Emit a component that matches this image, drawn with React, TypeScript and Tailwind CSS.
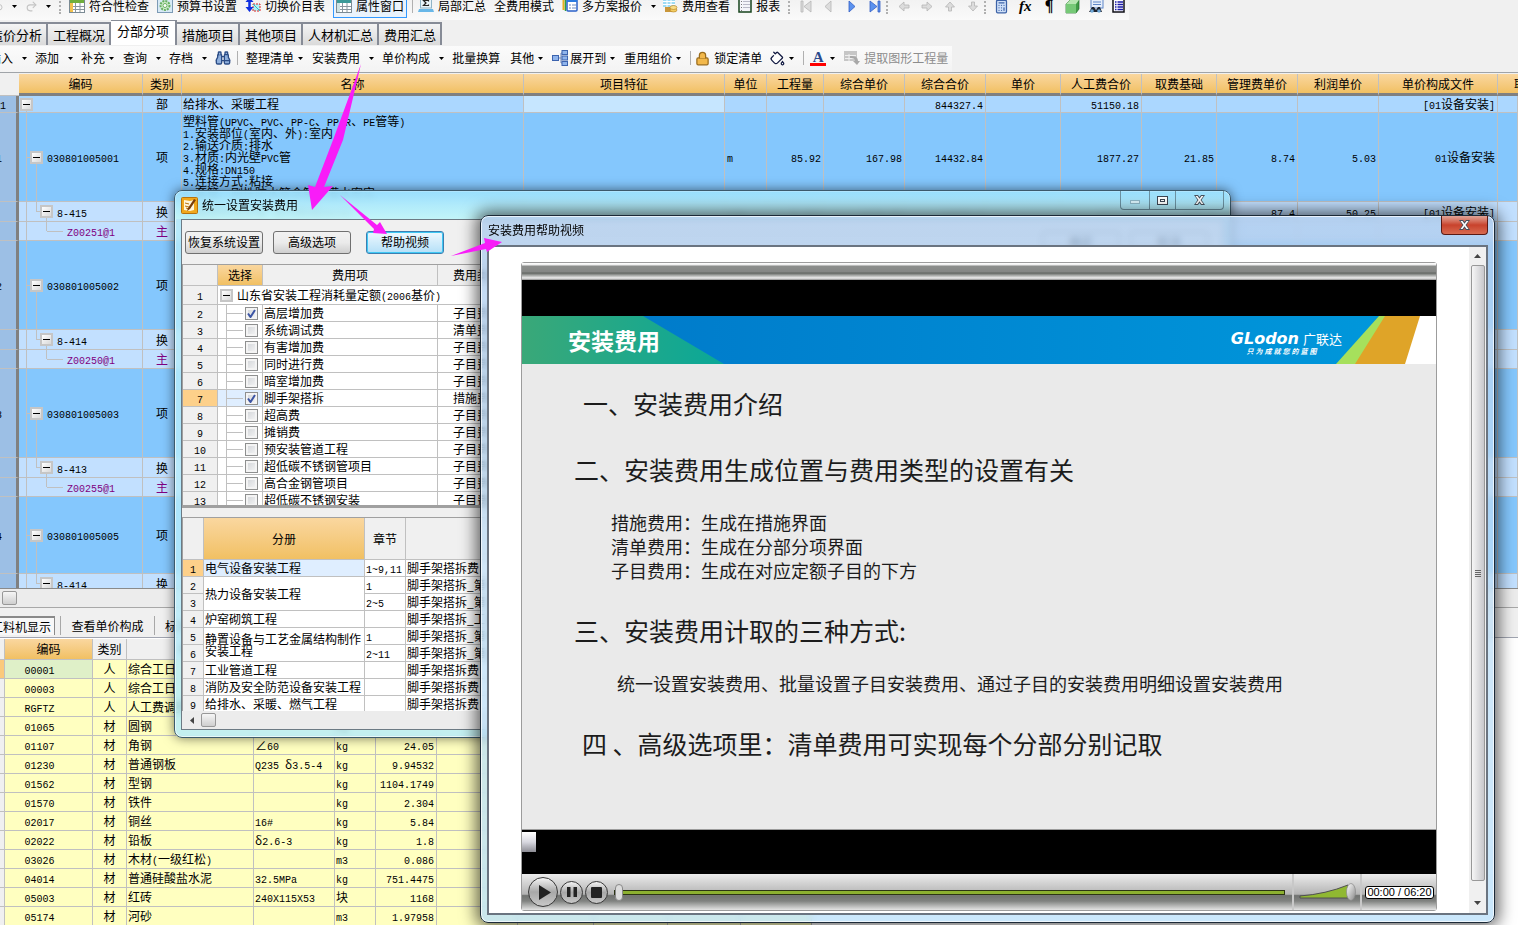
import { Fragment, useState } from "react";
import type { ReactNode } from "react";
import { Binoculars, Calculator, Lock, Undo2, Redo2, PaintBucket } from "lucide-react";

interface GridRow {
  no: string;
  level: number;
  code: string;
  kind: string;
  name?: string[];
  unit?: string;
  values?: string[];
  file?: string;
}

interface Material {
  code: string;
  kind: string;
  name: string;
  spec: string;
  unit: string;
  qty: string;
}

const gridHeaders = [
  "编码", "类别", "名称", "项目特征", "单位", "工程量", "综合单价", "综合合价",
  "单价", "人工费合价", "取费基础", "管理费单价", "利润单价", "单价构成文件",
];

const gridRows: GridRow[] = [
  {
    no: "1", level: 0, code: "", kind: "部", name: ["给排水、采暖工程"],
    values: ["", "", "844327.4", "", "51150.18", "", "", ""], file: "[01设备安装]",
  },
  {
    no: "1", level: 1, code: "030801005001", kind: "项",
    name: [
      "塑料管(UPVC、PVC、PP-C、PP-R、PE管等)",
      "1.安装部位(室内、外):室内",
      "2.输送介质:排水",
      "3.材质:内光壁PVC管",
      "4.规格:DN150",
      "5.连接方式:粘接",
      "6.套管、刚性防水管含管件灌水密实",
    ],
    unit: "m",
    values: ["85.92", "167.98", "14432.84", "", "1877.27", "21.85", "8.74", "5.03"],
    file: "01设备安装",
  },
  {
    no: "", level: 2, code: "8-415", kind: "换", name: ["承插塑料排水管 室内粘接DN150"], unit: "10m",
    values: ["8.592", "1679.83", "14433.1", "", "1877.27", "218.5", "87.4", "50.25"], file: "[01设备安装]",
  },
  { no: "", level: 3, code: "Z00251@1", kind: "主" },
  { no: "2", level: 1, code: "030801005002", kind: "项" },
  { no: "", level: 2, code: "8-414", kind: "换" },
  { no: "", level: 3, code: "Z00250@1", kind: "主" },
  { no: "3", level: 1, code: "030801005003", kind: "项" },
  { no: "", level: 2, code: "8-413", kind: "换" },
  { no: "", level: 3, code: "Z00255@1", kind: "主" },
  { no: "4", level: 1, code: "030801005005", kind: "项" },
  { no: "", level: 2, code: "8-414", kind: "换" },
];

const rowHeights = [17, 89, 20, 19, 89, 20, 19, 89, 20, 19, 77, 20];
const rowColors = ["bg-[#abd7ff]", "bg-[#84c7fd]", "bg-[#c2e0ff]", "bg-[#c2e0ff]"];

const feeItems = [
  ["高层增加费", "子目费用"], ["系统调试费", "清单费用"], ["有害增加费", "子目费用"],
  ["同时进行费", "子目费用"], ["暗室增加费", "子目费用"], ["脚手架搭拆", "措施费用"],
  ["超高费", "子目费用"], ["摊销费", "子目费用"], ["预安装管道工程", "子目费用"],
  ["超低碳不锈钢管项目", "子目费用"], ["高合金钢管项目", "子目费用"], ["超低碳不锈钢安装", "子目费用"],
];

const volumes = [
  { name: "电气设备安装工程", span: 1, chapter: "1~9,11", fee: "脚手架搭拆费" },
  { name: "热力设备安装工程", span: 2, chapter: "1", fee: "脚手架搭拆_第一章" },
  { name: "", span: 0, chapter: "2~5", fee: "脚手架搭拆_第二章" },
  { name: "炉窑砌筑工程", span: 1, chapter: "", fee: "脚手架搭拆_工业炉" },
  { name: "静置设备与工艺金属结构制作安装工程", span: 2, chapter: "1", fee: "脚手架搭拆_第一章" },
  { name: "", span: 0, chapter: "2~11", fee: "脚手架搭拆_第二章" },
  { name: "工业管道工程", span: 1, chapter: "", fee: "脚手架搭拆费" },
  { name: "消防及安全防范设备安装工程", span: 1, chapter: "", fee: "脚手架搭拆费" },
  { name: "给排水、采暖、燃气工程", span: 1, chapter: "", fee: "脚手架搭拆费" },
];

const materials: Material[] = [
  { code: "00001", kind: "人", name: "综合工日", spec: "", unit: "工日", qty: "" },
  { code: "00003", kind: "人", name: "综合工日", spec: "", unit: "工日", qty: "" },
  { code: "RGFTZ", kind: "人", name: "人工费调整", spec: "", unit: "元", qty: "" },
  { code: "01065", kind: "材", name: "圆钢", spec: "", unit: "kg", qty: "" },
  { code: "01107", kind: "材", name: "角钢", spec: "∠60", unit: "kg", qty: "24.05" },
  { code: "01230", kind: "材", name: "普通钢板", spec: "Q235 δ3.5-4", unit: "kg", qty: "9.94532" },
  { code: "01562", kind: "材", name: "型钢", spec: "", unit: "kg", qty: "1104.1749" },
  { code: "01570", kind: "材", name: "铁件", spec: "", unit: "kg", qty: "2.304" },
  { code: "02017", kind: "材", name: "铜丝", spec: "16#", unit: "kg", qty: "5.84" },
  { code: "02022", kind: "材", name: "铅板", spec: "δ2.6-3", unit: "kg", qty: "1.8" },
  { code: "03026", kind: "材", name: "木材(一级红松)", spec: "", unit: "m3", qty: "0.086" },
  { code: "04014", kind: "材", name: "普通硅酸盐水泥", spec: "32.5MPa", unit: "kg", qty: "751.4475" },
  { code: "05003", kind: "材", name: "红砖", spec: "240X115X53", unit: "块", qty: "1168" },
  { code: "05174", kind: "材", name: "河砂", spec: "", unit: "m3", qty: "1.97958" },
];

// Latin runs are set in a half-width mono face next to the full-width Chinese.
// Their own line height is zero so that they never stretch a table row.
function Mixed({ text }: { text: string }) {
  return (
    <>
      {text.split(/([\x20-\x7e]+)/).map((part, i) =>
        i % 2 === 1 ? (
          <span key={i} className="font-['Liberation_Mono'] text-[10px] leading-[0] whitespace-pre">{part}</span>
        ) : (
          <Fragment key={i}>{part}</Fragment>
        )
      )}
    </>
  );
}

function Caret() {
  return (
    <svg width="5" height="3" viewBox="0 0 5 3" className="shrink-0">
      <path d="M0 0h5L2.5 3z" fill="#000" />
    </svg>
  );
}

function Sep() {
  return <span className="h-3.5 w-px shrink-0 bg-[#b0b0b0]" />;
}

function Grip() {
  return <span className="h-4 w-0 shrink-0 border-l-2 border-dotted border-[#b0b0b0]" />;
}

function Tool({ icon, label }: { icon?: ReactNode; label: string }) {
  return (
    <button className="flex shrink-0 items-center gap-1 whitespace-nowrap">
      {icon}
      {label}
    </button>
  );
}

function Menu({ label, wide, icon }: { label?: string; wide?: boolean; icon?: ReactNode }) {
  return (
    <button className="flex shrink-0 items-center whitespace-nowrap">
      {icon}
      {label}
      <span className={wide ? "flex w-[22px] justify-center" : "flex w-[18px] pl-1"}>
        <Caret />
      </span>
    </button>
  );
}

function SheetIcon({ head, side }: { head: string; side: string }) {
  return (
    <svg width="16" height="16" viewBox="0 0 16 16" className="shrink-0">
      <rect x="0.5" y="0.5" width="15" height="14" fill="#fff" stroke="#7a8a94" />
      <rect x="1" y="1" width="14" height="4" fill={head} />
      <path d="M1 8.5h14M1 11.5h14M6.5 5v9M11 5v9" stroke="#8a979f" />
      <rect x="1" y="5" width="3" height="9" fill={side} />
    </svg>
  );
}

function GearSheetIcon() {
  return (
    <svg width="16" height="16" viewBox="0 0 16 16" className="shrink-0">
      <rect x="0.5" y="0.5" width="15" height="14" fill="#d7e9f5" stroke="#7c9ab5" />
      <circle cx="8" cy="7.5" r="4.5" fill="#cfeccb" stroke="#68b062" strokeWidth="2" strokeDasharray="2 1" />
      <circle cx="8" cy="7.5" r="2" fill="#fff" stroke="#68b062" />
    </svg>
  );
}

function SwapIcon() {
  return (
    <svg width="16" height="16" viewBox="0 0 16 16" className="shrink-0">
      <path d="M8 6h7v7H8z" fill="#aef2f4" stroke="#e02020" strokeDasharray="2 1" />
      <path d="M8 6l7 7" stroke="#30b8c8" />
      <path d="M4.500 2v8" stroke="#1030e0" strokeWidth="2.500" />
      <path d="M0.500 9h8l-4 5zM0.500 4h8l-4-5z" fill="#1030e0" />
    </svg>
  );
}

function SumIcon() {
  return (
    <svg width="16" height="16" viewBox="0 0 16 16" className="shrink-0">
      <rect x="2.5" y="0" width="11" height="10" fill="#e8f4fa" stroke="#8fb3c6" />
      <path d="M10.500 3.500V2.500H5.500L8 5L5.500 7.500H10.500V6.500" fill="none" stroke="#222" strokeWidth="1.200" />
      <path d="M1 11h14l1 3H0z" fill="#68b7e8" />
    </svg>
  );
}

function PlansIcon() {
  return (
    <svg width="16" height="16" viewBox="0 0 16 16" className="shrink-0">
      <path d="M1.500 1v11" stroke="#e8b020" strokeWidth="2" />
      <path d="M3.500 1v12" stroke="#30a040" strokeWidth="1.500" />
      <rect x="5" y="1" width="10" height="12" rx="1" fill="#fff" stroke="#2b62c9" strokeWidth="1.500" />
      <rect x="5" y="1" width="10" height="3" fill="#2b7be0" />
      <path d="M7 7h2M10 7h4M7 10h2M10 10h4" stroke="#6a8ac0" />
    </svg>
  );
}

function CoinsIcon() {
  return (
    <svg width="16" height="16" viewBox="0 0 16 16" className="shrink-0">
      <rect x="1" y="0" width="12" height="9" fill="#9edbf4" />
      <path d="M1 3.500h12M1 6.500h12M5 0v9M9 0v9" stroke="#fff" />
      <path d="M3 9h7v5H3z" fill="#c9973a" />
      <ellipse cx="11.500" cy="12" rx="3.500" ry="2" fill="#f3cd62" stroke="#b07c20" strokeWidth="0.600" />
      <ellipse cx="11.500" cy="9.500" rx="3.500" ry="2" fill="#f8dc86" stroke="#b07c20" strokeWidth="0.600" />
    </svg>
  );
}

function ReportIcon() {
  return (
    <svg width="14" height="16" viewBox="0 0 14 16" className="shrink-0">
      <rect x="1" y="-2" width="12" height="16" fill="#f4f4fa" stroke="#17441c" strokeWidth="1.500" />
      <path d="M5 3.500h7M5 6.500h7M5 9.500h7" stroke="#b9b9c8" />
      <path d="M3.500 0v13" stroke="#777" strokeDasharray="1 2" />
    </svg>
  );
}

function NavIcon({ d, active }: { d: string; active?: boolean }) {
  return (
    <button className="flex w-[23px] justify-center">
      <svg width="12" height="13" viewBox="0 0 12 13">
        <path d={d} fill={active ? "#5b92ef" : "#dcdcdc"} stroke={active ? "#3560c4" : "#b5b5b5"} strokeWidth="0.800" />
      </svg>
    </button>
  );
}

function TreeBox() {
  return (
    <span className="flex size-[13px] shrink-0 items-center justify-center border-2 border-[#c6c6c6] bg-gradient-to-br from-white to-[#d8d8d8]">
      <span className="h-px w-[7px] bg-black" />
    </span>
  );
}

function TreeCell({ level, code, height }: { level: number; code: string; height: number }) {
  const box = (
    <span className="flex h-full w-[13px] shrink-0 flex-col items-center">
      <span className="flex-1" />
      <TreeBox />
      <span className="w-px flex-1 bg-[#c0c0c0]" />
    </span>
  );
  return (
    <div className="flex items-center" style={{ height }}>
      {level === 0 ? (
        <span className="flex h-full pl-px">{box}</span>
      ) : (
        <span className="h-full w-2 shrink-0 border-r border-[#c0c0c0]" />
      )}
      {level === 1 && <span className="h-px w-[3px] bg-[#c0c0c0]" />}
      {level === 2 && (
        <>
          <span className="h-1/2 w-2.5 shrink-0 self-start border-r border-[#c0c0c0]" />
          <span className="h-px w-[3px] bg-[#c0c0c0]" />
        </>
      )}
      {level === 3 && (
        <>
          <span className="h-1/2 w-5 shrink-0 self-start border-r border-[#c0c0c0]" />
          <span className="h-px w-4 bg-[#c0c0c0]" />
        </>
      )}
      {(level === 1 || level === 2) && box}
      <span className="pl-1"><Mixed text={code} /></span>
    </div>
  );
}

function MainToolbar() {
  return (
    <div className="flex h-5 w-fit shrink-0 items-start overflow-hidden bg-gradient-to-b from-[#f2f2f2] to-[#fafafa] pr-1 leading-3">
      <div className="-mt-0.5 flex h-4 items-center gap-2">
        <span className="flex w-[51px] shrink-0 items-center justify-between text-[#c4c4c4]">
          <Undo2 size={12} className="-ml-2" />
          <Caret />
          <Redo2 size={13} />
          <Caret />
        </span>
        <Grip />
        <Tool icon={<SheetIcon head="#6fae3c" side="#f2c14e" />} label="符合性检查" />
        <Tool icon={<GearSheetIcon />} label="预算书设置" />
        <Tool icon={<SwapIcon />} label="切换价目表" />
        <span className="flex shrink-0 items-center gap-[5px]">
          <button className="flex h-6 shrink-0 items-center gap-1 border border-[#3399ff] bg-[#eaf3fc] px-0.5">
            <SheetIcon head="#3c9a98" side="#cfe3e3" />
            属性窗口
          </button>
          <Sep />
          <Tool icon={<SumIcon />} label="局部汇总" />
        </span>
        <Tool label="全费用模式" />
        <Menu icon={<span className="flex pr-1"><PlansIcon /></span>} label="多方案报价" wide />
        <span className="-ml-2.5 flex gap-2">
          <Tool icon={<CoinsIcon />} label="费用查看" />
          <Tool icon={<ReportIcon />} label="报表" />
        </span>
        <Grip />
        <div className="-mr-2 -ml-1 flex">
          <NavIcon d="M1 1h2v11H1zM11 1v11L4 6.500z" />
          <NavIcon d="M8 1v11L2 6.500z" />
          <NavIcon d="M3 1v11L9 6.500z" active />
          <NavIcon d="M9 1h2v11H9zM1 1v11l7-5.500z" active />
        </div>
        <Grip />
        <div className="-mr-2 -ml-1 flex">
          <NavIcon d="M1 6.500l5-4.500v3h5v3H6v3z" />
          <NavIcon d="M11 6.500L6 2v3H1v3h5v3z" />
          <NavIcon d="M6 2l4.500 5h-3v4h-3V7h-3z" />
          <NavIcon d="M6 11l4.500-5h-3V2h-3v4h-3z" />
        </div>
        <Grip />
        <div className="flex items-center gap-2">
          <Calculator size={15} className="fill-[#cfe0f8] text-[#3d63a8]" />
          <span className="w-4 text-center font-['Liberation_Serif'] text-[15px] leading-none font-bold italic">fx</span>
          <span className="w-4 text-center font-['Liberation_Serif'] text-[16px] leading-none font-bold">¶</span>
          <svg width="15" height="15" viewBox="0 0 15 15">
            <path d="M1 5l4-4h9v9l-3 4H1z" fill="#3f9c46" stroke="#1f6a2a" strokeWidth="0.700" />
            <path d="M1 5h10v9H1z" fill="#76c977" />
            <path d="M1 5l4-4h9l-3 4z" fill="#b5e6b0" />
          </svg>
          <svg width="16" height="15" viewBox="0 0 16 15">
            <rect x="3" y="0" width="12" height="9" fill="#e6eefa" stroke="#5e86c8" />
            <path d="M5 3h8M5 5.500h8" stroke="#5e86c8" />
            <path d="M1 13l3-5h2l2 3 2-3h2l2 5z" fill="#1e2430" />
            <circle cx="4" cy="12" r="1.800" fill="#6fa8d8" />
            <circle cx="11" cy="12" r="1.800" fill="#6fa8d8" />
          </svg>
          <svg width="13" height="15" viewBox="0 0 13 15">
            <rect x="1" y="0" width="11" height="13" fill="#fff" stroke="#101018" strokeWidth="1.500" />
            <path d="M3 3h1.500M5.500 3H11M3 5.500h1.500M5.500 5.500H11M3 8h1.500M5.500 8H11M3 10.500h1.500M5.500 10.500H11" stroke="#1a1aa8" strokeWidth="1.300" />
          </svg>
        </div>
      </div>
    </div>
  );
}

function Tabs() {
  const tabs = ["造价分析", "工程概况", "分部分项", "措施项目", "其他项目", "人材机汇总", "费用汇总"];
  return (
    <div className="-ml-[15px] flex h-[25px] shrink-0 items-end text-[13px]">
      {tabs.map((tab) => (
        <button
          key={tab}
          className={
            tab === "分部分项"
              ? "h-[25px] shrink-0 border-t border-r-2 border-[#868b96] bg-white px-1.5 pb-1"
              : "h-[23px] shrink-0 border-t-2 border-r-2 border-[#868b96] bg-gradient-to-b from-[#f4f4f4] to-[#dadada] pr-1 pl-[5px]"
          }
        >
          {tab}
        </button>
      ))}
    </div>
  );
}

function EditToolbar() {
  return (
    <div className="flex h-[26px] w-fit shrink-0 items-center overflow-hidden bg-gradient-to-b from-[#fbfbfb] to-[#f3f3f3] pr-1 pb-0.5">
      <span className="-ml-[11px] flex">
        <Menu label="插入" wide />
        <Menu label="添加" wide />
        <Menu label="补充" />
        <Menu label="查询" wide />
        <Menu label="存档" wide />
      </span>
      <Binoculars size={16} className="mr-1.5 fill-[#8fb0dd] text-[#2c4d86]" />
      <Sep />
      <span className="flex pl-2">
        <Menu label="整理清单" />
        <Menu label="安装费用" wide />
        <Menu label="单价构成" wide />
      </span>
      <Tool label="批量换算" />
      <span className="flex pl-2.5">
        <Menu label="其他" />
        <Menu
          icon={
            <svg width="16" height="16" viewBox="0 0 16 16" className="mr-0.5">
              <path d="M6 8h3M9 3v10M9 3h2M9 13h2" stroke="#6c84b8" fill="none" />
              <rect x="0.500" y="5.500" width="6" height="5" fill="#8fb4ec" stroke="#3c63ae" />
              <rect x="10" y="0.500" width="5.500" height="4" fill="#8fb4ec" stroke="#3c63ae" />
              <rect x="10" y="6" width="5.500" height="4" fill="#8fb4ec" stroke="#3c63ae" />
              <rect x="10" y="11.500" width="5.500" height="4" fill="#8fb4ec" stroke="#3c63ae" />
            </svg>
          }
          label="展开到"
        />
        <Menu label="重用组价" />
      </span>
      <Sep />
      <span className="flex gap-2 pl-1">
        <Tool icon={<Lock size={15} className="fill-[#f2b84b] text-[#9a6c1c]" />} label="锁定清单" />
        <Menu icon={<PaintBucket size={15} className="fill-white text-[#101840]" />} />
      </span>
      <Sep />
      <span className="flex pl-1.5">
        <Menu
          icon={
            <span className="w-4 border-b-[3px] border-[#ff0000] text-center font-['Liberation_Serif'] text-[15px] leading-3 font-bold text-[#2b4a8c]">
              A
            </span>
          }
        />
      </span>
      <button disabled className="flex shrink-0 items-center gap-1 whitespace-nowrap text-[#8c8c8c]">
        <svg width="16" height="16" viewBox="0 0 16 16">
          <rect x="0" y="1" width="13" height="10" fill="#c6c6c6" />
          <path d="M1 5.500h11M1 8.500h11M5 4v7" stroke="#efefef" />
          <path d="M6 8c4 0 5 1 5 3h-2l4 4 3-4h-2c0-4-3-5-8-5z" fill="#a8a8a8" />
        </svg>
        提取图形工程量
      </button>
    </div>
  );
}

function BudgetGrid() {
  const cell = "overflow-hidden border-r border-b border-[#c0c0c0] p-0 whitespace-nowrap";
  return (
    <div className="h-[516px] shrink-0 overflow-hidden border-t border-[#a0a4a8] pt-px">
      <table className="w-full table-fixed border-separate border-spacing-0">
        <colgroup>
          <col className="w-[19px]" />
          <col className="w-[124px]" />
          <col className="w-[39px]" />
          <col className="w-[342px]" />
          <col className="w-[201px]" />
          <col className="w-[42px]" />
          <col className="w-[57px]" />
          <col className="w-[81px]" />
          <col className="w-[81px]" />
          <col className="w-[75px]" />
          <col className="w-[81px]" />
          <col className="w-[75px]" />
          <col className="w-[81px]" />
          <col className="w-[81px]" />
          <col className="w-[119px]" />
          <col />
        </colgroup>
        <thead>
          <tr className="h-[22px]">
            <th className="border-b border-[#c0c0c0] bg-[#f0f0f0] p-0" />
            {gridHeaders.map((h) => (
              <th key={h} className="border-r border-b-3 border-r-[#c0c0c0] border-b-[#808080] bg-gradient-to-b from-[#fad79f] to-[#f1c062] p-0 font-normal">
                {h}
              </th>
            ))}
            <th className="overflow-hidden border-b-3 border-[#808080] bg-gradient-to-b from-[#fad79f] to-[#f1c062] p-0 pl-4 text-left font-normal whitespace-nowrap">取费专业</th>
          </tr>
        </thead>
        <tbody>
          {gridRows.map((row, i) => {
            const height = rowHeights[i] - 1;
            return (
              <tr key={i} className={`${rowColors[row.level]} ${row.level === 3 ? "text-[#800080]" : ""}`}>
                <td className="overflow-hidden border-r-3 border-b border-r-[#808080] border-b-[#c0c0c0] bg-[#9cbfe5] p-0 text-black">
                  <span className={row.level === 0 ? "block" : "-ml-1 block"}><Mixed text={row.no} /></span>
                </td>
                <td className={cell}><TreeCell level={row.level} code={row.code} height={height} /></td>
                <td className={`${cell} text-center`}>{row.kind}</td>
                <td className={cell}>
                  <div className="flex flex-col justify-center overflow-hidden pl-px leading-3" style={{ height }}>
                    {row.name?.map((line) => <div key={line}><Mixed text={line} /></div>)}
                  </div>
                </td>
                <td className={row.level === 0 ? `${cell} bg-[#c6e6ff]` : cell} />
                <td className={`${cell} pl-0.5`}><Mixed text={row.unit ?? ""} /></td>
                {Array.from({ length: 8 }, (_, c) => (
                  <td key={c} className={`${cell} pr-0.5 text-right`}><Mixed text={row.values?.[c] ?? ""} /></td>
                ))}
                <td className={`${cell} pr-0.5 text-right`}><Mixed text={row.file ?? ""} /></td>
                <td className={cell} />
              </tr>
            );
          })}
        </tbody>
      </table>
    </div>
  );
}

function MaterialsPanel() {
  const cell = "overflow-hidden border-r border-b border-[#c0c0c0] p-0 whitespace-nowrap";
  return (
    <>
      <div className="flex h-[19px] shrink-0 items-center border-t border-[#8a8a8a] bg-[#ececec] pl-0.5">
        <span className="h-3.5 w-[15px] rounded-xs border border-[#989898] bg-gradient-to-b from-[#f6f6f6] to-[#cfcfcf]" />
      </div>
      <div className="flex h-[31px] shrink-0 items-end overflow-hidden border-t border-b border-t-[#a8a8a8] border-b-[#a0a4b0] pb-0.5">
        <button className="-ml-5 h-[19px] w-[75px] shrink-0 border-t-2 border-r border-[#8a8a8a] bg-[#f8f8f8] pl-2 whitespace-nowrap">工料机显示</button>
        <span className="ml-[5px] h-[19px] w-px bg-[#a8a8a8]" />
        <button className="h-[19px] w-[93px] shrink-0">查看单价构成</button>
        <span className="h-[19px] w-px bg-[#a8a8a8]" />
        <button className="h-[19px] pl-2.5">标准换算</button>
      </div>
      <div className="min-h-0 flex-1 overflow-hidden bg-white pt-px">
        <table className="w-[812px] table-fixed border-separate border-spacing-0 bg-[#ffffc0]">
          <colgroup>
            <col className="w-[5px]" />
            <col className="w-[88px]" />
            <col className="w-[34px]" />
            <col className="w-[127px]" />
            <col className="w-[81px]" />
            <col className="w-[41px]" />
            <col className="w-[61px]" />
            <col className="w-[81px]" />
            <col className="w-[76px]" />
            <col className="w-[74px]" />
            <col className="w-[73px]" />
            <col />
          </colgroup>
          <thead>
            <tr className="h-[21px] bg-[#f0f0f0]">
              <th className={cell} />
              <th className={`${cell} bg-gradient-to-b from-[#fad79f] to-[#f1c062] font-normal`}>编码</th>
              {["类别", "名称", "规格及型号", "单位", "数量", "含税预算价", "市场价", "合价", "供货方式", "产地"].map((h) => (
                <th key={h} className={`${cell} font-normal`}>{h}</th>
              ))}
            </tr>
          </thead>
          <tbody>
            {materials.map((m, i) => (
              <tr key={m.code} className="h-[19px]">
                <td className={i === 0 ? `${cell} bg-[#fbc97c]` : `${cell} bg-[#f0f0f0]`} />
                <td className={i === 0 ? `${cell} bg-[#dff0c8] pr-4.5 text-center` : `${cell} pr-4.5 text-center`}><Mixed text={m.code} /></td>
                <td className={`${cell} text-center`}>{m.kind}</td>
                <td className={`${cell} pl-px`}><Mixed text={m.name} /></td>
                <td className={`${cell} pl-px`}><Mixed text={m.spec} /></td>
                <td className={`${cell} pl-px`}><Mixed text={m.unit} /></td>
                <td className={`${cell} pr-0.5 text-right`}><Mixed text={m.qty} /></td>
                <td className={cell} />
                <td className={cell} />
                <td className={cell} />
                <td className={cell} />
                <td className={cell} />
              </tr>
            ))}
          </tbody>
        </table>
      </div>
    </>
  );
}

function FeeDialog() {
  const [checked, setChecked] = useState<number[]>([0, 5]);
  const cell = "overflow-hidden border-r border-b border-[#c0c0c0] p-0 whitespace-nowrap";
  const button = "h-[23px] w-[78px] shrink-0 rounded-[3px] border border-[#707070] bg-gradient-to-b from-[#f2f2f2] via-[#ebebeb] to-[#cfcfcf]";

  const toggle = (i: number) => {
    setChecked(checked.includes(i) ? checked.filter((c) => c !== i) : [...checked, i]);
  };

  return (
    <section className="absolute top-[190px] right-[287px] left-[174px] flex h-[548px] flex-col rounded-lg border border-[#3c5a6c] bg-[#b5ecfb]/80 px-1.5 pb-[7px] shadow-[0_0_12px_rgba(0,0,0,0.55)] ring-1 ring-white/60 backdrop-blur-[3px] ring-inset">
      <header className="-mx-1.5 flex h-7 shrink-0 items-center gap-1 rounded-t-lg bg-gradient-to-b from-[#8fdbff]/60 to-[#c9fbf6]/60 pr-1.5 pl-1.5">
        <svg width="17" height="17" viewBox="0 0 17 17">
          <rect x="0.500" y="0.500" width="16" height="16" rx="1" fill="#f0a81c" stroke="#b8720c" />
          <path d="M3 3l6 1 4-1v10l-4 1-6-1z" fill="#fff6da" />
          <path d="M4 6l4 1M4 9l4 1M5 11l3 1" stroke="#b8720c" />
          <path d="M13 2L7 11l-1 3 3-2 6-9z" fill="#7a3c08" />
        </svg>
        <h2 className="flex-1">统一设置安装费用</h2>
        <div className="flex h-[19px] self-start rounded-b-[4px] border border-t-0 border-[#6d93a3]">
          <button aria-label="最小化" className="flex w-7 items-end justify-center pb-[5px]">
            <span className="h-1 w-2.5 border border-[#8fb8c8] bg-white/60" />
          </button>
          <button aria-label="最大化" className="flex w-[27px] items-center justify-center border-x border-[#6d93a3]">
            <span className="flex h-[9px] w-[11px] items-center justify-center border border-[#3c4654] bg-white">
              <span className="h-[3px] w-[5px] border border-[#3c4654]" />
            </span>
          </button>
          <button aria-label="关闭" className="flex w-[47px] items-center justify-center">
            <CloseMark />
          </button>
        </div>
      </header>

      <div className="flex min-h-0 flex-1 flex-col border border-[#6c7a84] bg-[#f0f0f0]">
        <div className="flex h-11 shrink-0 items-center px-[3px]">
          <button className={button}>恢复系统设置</button>
          <button className={`${button} ml-2.5`}>高级选项</button>
          <button className="ml-[15px] h-[23px] w-[78px] shrink-0 rounded-[3px] border border-[#3c7fb1] bg-gradient-to-b from-[#eef8fe] to-[#b4e0f8] ring-1 ring-[#3fc8f4] ring-inset">帮助视频</button>
          <span className="flex-1" />
          <button className={button}>确定</button>
          <button className={`${button} mr-3 ml-2.5`}>取消</button>
        </div>

        <div className="h-[244px] shrink-0 overflow-hidden border-t border-b-3 border-l border-[#a0a0a0] bg-white">
          <table className="w-full table-fixed border-separate border-spacing-0">
            <colgroup>
              <col className="w-[35px]" />
              <col className="w-[45px]" />
              <col className="w-[175px]" />
              <col />
            </colgroup>
            <thead>
              <tr className="h-[21px] bg-[#f0f0f0]">
                <th className={cell} />
                <th className={`${cell} bg-gradient-to-b from-[#fad79f] to-[#f1c062] font-normal`}>选择</th>
                <th className={`${cell} font-normal`}>费用项</th>
                <th className={`${cell} pl-[15px] text-left font-normal`}>费用类型</th>
              </tr>
            </thead>
            <tbody>
              <tr className="h-[19px]">
                <td className={`${cell} bg-[#f0f0f0] text-center`}><Mixed text="1" /></td>
                <td colSpan={3} className={cell}>
                  <div className="flex h-[18px] items-center pl-0.5">
                    <TreeBox />
                    <span className="pl-1"><Mixed text="山东省安装工程消耗量定额(2006基价)" /></span>
                  </div>
                </td>
              </tr>
              {feeItems.map(([name, type], i) => (
                <tr key={name} className="h-[17px] leading-4">
                  <td className={i === 5 ? `${cell} bg-[#fdd08a] text-center` : `${cell} bg-[#f0f0f0] text-center`}>
                    <Mixed text={String(i + 2)} />
                  </td>
                  <td className={i === 5 ? `${cell} bg-[#dfeeff]` : cell}>
                    <div className="flex h-4 items-center">
                      <span className="h-full w-[9px] border-r border-[#c0c0c0]" />
                      <span className="mr-0.5 h-px w-4 bg-[#c0c0c0]" />
                      <label className="grid size-[13px] place-items-center">
                        <input
                          type="checkbox"
                          aria-label={name}
                          checked={checked.includes(i)}
                          onChange={() => toggle(i)}
                          className="peer col-start-1 row-start-1 size-[13px] appearance-none border border-[#8e8f8f] bg-gradient-to-br from-[#cfd2d6] to-[#f8f8f8] outline-2 -outline-offset-3 outline-[#f4f4f4]"
                        />
                        <svg width="9" height="9" viewBox="0 0 9 9" className="pointer-events-none col-start-1 row-start-1 hidden peer-checked:block">
                          <path d="M1 4.500L3.500 8L8 1" fill="none" stroke="#3c55a4" strokeWidth="2" />
                        </svg>
                      </label>
                    </div>
                  </td>
                  <td className={`${cell} pl-px`}>{name}</td>
                  <td className={`${cell} pl-[15px]`}>{type}</td>
                </tr>
              ))}
            </tbody>
          </table>
        </div>

        <div className="mt-[9px] min-h-0 flex-1 overflow-hidden border-t border-l border-[#a0a0a0] bg-white">
          <table className="w-full table-fixed border-separate border-spacing-0">
            <colgroup>
              <col className="w-[21px]" />
              <col className="w-[161px]" />
              <col className="w-[41px]" />
              <col />
            </colgroup>
            <thead>
              <tr className="h-[42px] bg-[#f0f0f0]">
                <th className={cell} />
                <th className={`${cell} bg-gradient-to-b from-[#fad79f] to-[#f1c062] font-normal`}>分册</th>
                <th className={`${cell} font-normal`}>章节</th>
                <th className={`${cell} font-normal`}>费用名称</th>
              </tr>
            </thead>
            <tbody>
              {volumes.map((v, i) => (
                <tr key={i} className="h-[17px] leading-4">
                  <td className={i === 0 ? `${cell} bg-[#fdd08a] text-center` : `${cell} bg-[#f0f0f0] text-center`}>
                    <Mixed text={String(i + 1)} />
                  </td>
                  {v.span > 0 && (
                    <td
                      rowSpan={v.span}
                      className={
                        i === 0
                          ? "border-r border-b border-[#c0c0c0] bg-[#dfeeff] p-0 pl-px"
                          : "border-r border-b border-[#c0c0c0] p-0 pl-px leading-3"
                      }
                    >
                      {v.name}
                    </td>
                  )}
                  <td className={`${cell} pl-px`}><Mixed text={v.chapter} /></td>
                  <td className={`${cell} pl-px`}>{v.fee}</td>
                </tr>
              ))}
            </tbody>
          </table>
        </div>
        <div className="flex h-[18px] shrink-0 items-center bg-[#ececec] pl-2">
          <svg width="4" height="7" viewBox="0 0 4 7"><path d="M4 0v7L0 3.500z" fill="#444" /></svg>
          <span className="ml-[7px] h-3.5 w-[15px] rounded-xs border border-[#989898] bg-gradient-to-b from-[#f6f6f6] to-[#cfcfcf]" />
        </div>
      </div>
    </section>
  );
}

function CloseMark() {
  return (
    <svg width="13" height="10" viewBox="0 0 13 10">
      <path d="M1 0h4l1.500 2L8 0h4L8.500 5l3.500 5H8L6.500 8L5 10H1l3.500-5z" fill="#46505c" />
      <path d="M2.500 1h2l2 2.700L8.500 1h2L7.500 5l3 4h-2l-2-2.700L4.500 9h-2l3-4z" fill="#fff" />
    </svg>
  );
}

function PlayerButton({ label, large, children }: { label: string; large?: boolean; children: ReactNode }) {
  return (
    <button
      aria-label={label}
      className={
        large
          ? "flex size-[30px] items-center justify-center rounded-full border border-[#383838] bg-gradient-to-b from-[#f4f4f4] via-[#a8a8a8] to-[#c8c8c8]"
          : "flex size-[23px] items-center justify-center rounded-full border border-[#383838] bg-gradient-to-b from-[#f4f4f4] via-[#a8a8a8] to-[#c8c8c8]"
      }
    >
      {children}
    </button>
  );
}

function Slide() {
  return (
    <div className="flex min-h-0 flex-1 flex-col bg-[#eaeaea] text-[#1c1c1c]">
      <div className="relative flex h-12 shrink-0 items-center bg-gradient-to-r from-[#0077c8] to-[#0099dc] pl-[46px]">
        <svg className="absolute top-0 left-0 h-full w-[202px]" viewBox="0 0 202 48" preserveAspectRatio="none">
          <defs>
            <linearGradient id="green" x1="0" y1="0" x2="1" y2="0">
              <stop offset="0" stopColor="#3aa878" />
              <stop offset="1" stopColor="#0aa898" />
            </linearGradient>
          </defs>
          <path d="M0 0H121L202 48H0z" fill="url(#green)" />
        </svg>
        <svg className="absolute top-0 right-0 h-full w-[101px]" viewBox="0 0 101 48">
          <path d="M46 0H101V48H20z" fill="#fff" />
          <path d="M44 0H52L24 48H1z" fill="#a6e05c" />
          <path d="M50 0H85L70 48H20z" fill="#dfa428" />
        </svg>
        <h3 className="relative text-[23px] font-bold text-white">安装费用</h3>
        <div className="absolute top-4 right-[94px] flex flex-col items-center leading-none text-white">
          <div className="flex items-center gap-1">
            <span className="font-['DejaVu_Sans'] text-[16px] leading-[14px] font-bold italic">GLodon</span>
            <span className="text-[13px] leading-[14px]">广联达</span>
          </div>
          <div className="flex gap-0.5 pt-px pr-2.5 text-[7px] leading-2 font-bold italic">
            {"只为成就您的蓝图".split("").map((c) => <span key={c}>{c}</span>)}
          </div>
        </div>
      </div>
      <div className="px-[52px] pt-[21px] text-[25px] leading-9 whitespace-nowrap">
        <p className="pl-[9px]">一、安装费用介绍</p>
        <p className="pt-[30px]">二、安装费用生成位置与费用类型的设置有关</p>
        <div className="pt-[23px] pl-[37px] text-[18px] leading-6">
          <p>措施费用：生成在措施界面</p>
          <p>清单费用：生成在分部分项界面</p>
          <p>子目费用：生成在对应定额子目的下方</p>
        </div>
        <p className="pt-[30px]">三、安装费用计取的三种方式:</p>
        <p className="pt-[23px] pl-[43px] text-[18px] leading-6">
          统一设置安装费用、批量设置子目安装费用、通过子目的安装费用明细设置安装费用
        </p>
        <p className="pt-[30px] pl-2">四 、高级选项里：清单费用可实现每个分部分别记取</p>
      </div>
    </div>
  );
}

function VideoDialog() {
  return (
    <section className="absolute top-[215px] right-[23px] bottom-0.5 left-[480px] flex flex-col rounded-lg border border-[#1c2a38] bg-gradient-to-b from-[#b0cdee]/80 via-[#bcdcf4]/70 to-[#b8dffa]/75 px-1.5 pb-[7px] shadow-[0_0_16px_4px_rgba(0,0,0,0.6)] ring-1 ring-white/70 backdrop-blur-[3px] ring-inset">
      <header className="flex h-[29px] shrink-0 items-start justify-between">
        <h2 className="pt-1.5 pl-px font-normal">安装费用帮助视频</h2>
        <button
          aria-label="关闭"
          className="flex h-[19px] w-[47px] items-center justify-center rounded-b-[4px] border border-t-0 border-[#5a1a14] bg-gradient-to-b from-[#e0a498] via-[#c8422c] to-[#d86a50]"
        >
          <CloseMark />
        </button>
      </header>

      <div className="flex min-h-0 flex-1 border-2 border-[#6a7480] bg-white">
        <div className="flex min-w-0 flex-1 flex-col px-8 pt-[15px] pb-0.5">
          <div className="flex min-h-0 flex-1 flex-col rounded-[3px] border border-[#9c9c9c]">
            <div className="h-[17px] shrink-0 bg-[linear-gradient(#ffffff_0px,#ececec_2px,#8c8e8c_3px,#848684_9px,#606460_10px,#9c9e9c_12px,#eeeeee_15px,#8c8c8c_17px)]" />
            <div className="h-9 shrink-0 bg-black" />
            <Slide />
            <div className="h-[45px] shrink-0 border-t border-[#9c9c9c] bg-black pt-0.5">
              <span className="block h-5 w-3.5 bg-gradient-to-b from-white via-[#d8d8e0] to-[#8c8c94]" />
            </div>
            <div className="flex h-9 shrink-0 items-center bg-[linear-gradient(#ececec_0%,#b4b4b4_56%,#707270_60%,#808280_75%,#e4e4e4_100%)] pr-0.5 pl-1.5">
              <PlayerButton label="播放" large>
                <svg width="12" height="15" viewBox="0 0 12 15" className="ml-1"><path d="M0 0L12 7.500L0 15z" fill="#222" /></svg>
              </PlayerButton>
              <span className="w-0.5" />
              <PlayerButton label="暂停">
                <svg width="10" height="10" viewBox="0 0 10 10"><path d="M0 0h3.500v10H0zM6.500 0H10v10H6.500z" fill="#222" /></svg>
              </PlayerButton>
              <span className="w-0.5" />
              <PlayerButton label="停止">
                <svg width="11" height="11" viewBox="0 0 11 11"><rect width="11" height="11" rx="1" fill="#222" /></svg>
              </PlayerButton>
              <input
                type="range"
                aria-label="进度"
                defaultValue={0}
                className="ml-1.5 h-[17px] min-w-0 flex-1 appearance-none bg-transparent [&::-webkit-slider-runnable-track]:h-[5px] [&::-webkit-slider-runnable-track]:border [&::-webkit-slider-runnable-track]:border-[#2c3414] [&::-webkit-slider-runnable-track]:bg-[#8cb030] [&::-webkit-slider-thumb]:-mt-[7px] [&::-webkit-slider-thumb]:h-[17px] [&::-webkit-slider-thumb]:w-2 [&::-webkit-slider-thumb]:appearance-none [&::-webkit-slider-thumb]:rounded-full [&::-webkit-slider-thumb]:border [&::-webkit-slider-thumb]:border-[#888] [&::-webkit-slider-thumb]:bg-[#dcdcdc]"
              />
              <span className="ml-[7px] h-full w-0.5 bg-[#c8c8c8]" />
              <svg width="58" height="20" viewBox="0 0 58 20" className="mr-1 ml-1">
                <defs>
                  <linearGradient id="knob" x1="0" y1="0" x2="1" y2="1">
                    <stop offset="0" stopColor="#fff" />
                    <stop offset="1" stopColor="#888" />
                  </linearGradient>
                </defs>
                <path d="M2 14Q28 12 50 3V16H2z" fill="#90b832" stroke="#505050" />
                <ellipse cx="53" cy="10" rx="4.500" ry="8.500" fill="url(#knob)" stroke="#888" strokeWidth="0.700" />
              </svg>
              <span className="mr-[3px] h-full w-0.5 bg-[#c8c8c8]" />
              <span className="h-[13px] w-[69px] rounded-[3px] border border-black bg-white text-center font-['Liberation_Sans'] text-[11px] leading-[11px] whitespace-nowrap">00:00 / 06:20</span>
            </div>
          </div>
        </div>
        <div className="flex w-[17px] shrink-0 flex-col items-center bg-[#f0f0f0]">
          <span className="flex h-[18px] items-center"><svg width="7" height="4" viewBox="0 0 7 4"><path d="M0 4h7L3.500 0z" fill="#444" /></svg></span>
          <span className="flex w-3.5 flex-1 flex-col items-center justify-center gap-px rounded-xs border border-[#989898] bg-gradient-to-r from-[#f6f6f6] to-[#c8c8cc]">
            <span className="h-px w-1.5 bg-[#666]" />
            <span className="h-px w-1.5 bg-[#666]" />
            <span className="h-px w-1.5 bg-[#666]" />
            <span className="h-px w-1.5 bg-[#666]" />
          </span>
          <span className="flex h-8 items-center pt-3"><svg width="7" height="4" viewBox="0 0 7 4"><path d="M0 0h7L3.500 4z" fill="#444" /></svg></span>
        </div>
      </div>
    </section>
  );
}

// Pink callouts that lead from the menu to the dialog and then to the video
function Arrows() {
  return (
    <svg width="520" height="270" viewBox="0 0 520 270" className="pointer-events-none absolute top-0 left-0" fill="#f81cf8">
      <path d="M361 64L343 140L324 187L333 186L312 210L308 185L315 187L333 140z" />
      <path d="M340 195L377 225L380 222L387 234L373 233L374 229z" />
      <path d="M451 256L485 243L484 238L502 242L487 252L486 249z" />
    </svg>
  );
}

export default function App() {
  return (
    <main className="relative flex h-screen flex-col overflow-hidden bg-[#f0f0f0] font-['Noto_Sans_CJK_SC',sans-serif] text-[12px] leading-4 text-black">
      <MainToolbar />
      <Tabs />
      <div className="h-px shrink-0" />
      <EditToolbar />
      <BudgetGrid />
      <MaterialsPanel />
      <FeeDialog />
      <VideoDialog />
      <Arrows />
    </main>
  );
}
